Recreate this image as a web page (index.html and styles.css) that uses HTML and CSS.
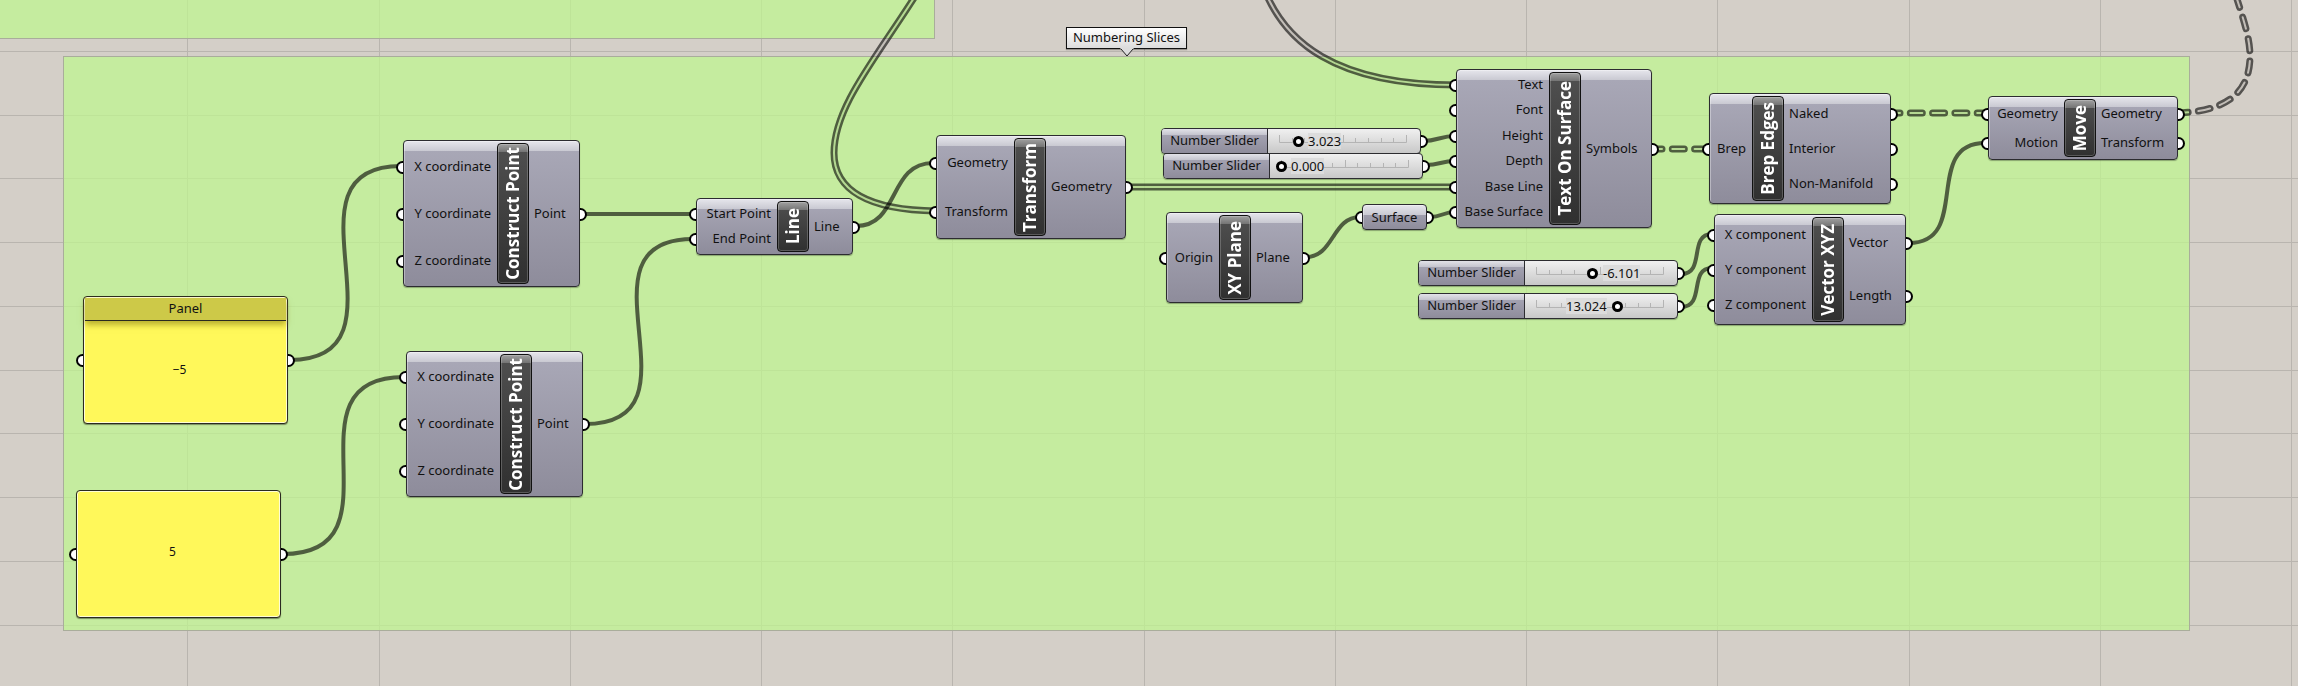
FILE: index.html
```html
<!DOCTYPE html>
<html lang="en">
<head>
<meta charset="utf-8">
<title>Numbering Slices</title>
<link rel="stylesheet" href="styles.css">
</head>
<body>
<main class="canvas">
  <svg class="layer" aria-hidden="true">
    <path class="grid" d="M187.500 0V2000M379.500 0V2000M570.500 0V2000M761.500 0V2000M952.500 0V2000M1144.500 0V2000M1335.500 0V2000M1526.500 0V2000M1717.500 0V2000M1909.500 0V2000M2100.500 0V2000M2291.500 0V2000M0 51.500H4000M0 115.500H4000M0 178.500H4000M0 242.500H4000M0 306.500H4000M0 370.500H4000M0 433.500H4000M0 497.500H4000M0 561.500H4000M0 625.500H4000"/>
  </svg>
  <div class="group group-upper"></div>
  <div class="group group-main"></div>

  <svg class="layer" aria-hidden="true">
    <defs>
      <path id="d1" d="M914 -2C873 62 834 108 834 153C834 190 868 210 936 211"/>
      <path id="d2" d="M1268 -2C1287 38 1330 85 1457 85"/>
      <path id="d3" d="M1126 187H1457"/>
      <path id="t1" d="M1650 149H1709"/>
      <path id="t2" d="M1888 113H1988"/>
      <path id="t3" d="M2176 113C2222 112 2250 96 2250 56C2250 38 2243 18 2236 -4"/>
      <mask id="hollow" maskUnits="userSpaceOnUse" x="0" y="0" width="2400" height="700">
        <g class="mask-double-outer"><use href="#d1"/><use href="#d2"/><use href="#d3"/></g>
        <g class="mask-double-inner"><use href="#d1"/><use href="#d2"/><use href="#d3"/></g>
        <g class="mask-tree-outer"><use href="#t1"/><use href="#t2"/><use href="#t3"/></g>
        <g class="mask-tree-inner"><use href="#t1"/><use href="#t2"/><use href="#t3"/></g>
      </mask>
    </defs>
    <rect class="hollow-wires" width="2400" height="700" mask="url(#hollow)"/>
    <g class="wire">
      <path d="M290 360C418 360 273 166 401 166"/>
      <path d="M283 554C408 554 279 377 404 377"/>
      <path d="M582 214H696"/>
      <path d="M585 424C711 424 567 239 693 239"/>
      <path d="M856 226C900 226 888 163 933 163"/>
      <path d="M1423 141C1438 141 1440 136 1455 136"/>
      <path d="M1426 165C1440 165 1441 161 1455 161"/>
      <path d="M1306 257C1334 257 1332 217 1360 217"/>
      <path d="M1430 217C1442 217 1443 212 1455 212"/>
      <path d="M1681 274C1706 274 1688 234 1712 234"/>
      <path d="M1681 307C1706 307 1688 268 1712 268"/>
      <path d="M1909 243C1972 243 1922 143 1985 143"/>
    </g>
  </svg>

  <div class="tag">Numbering Slices<svg class="tag-tip" width="14" height="9" viewBox="0 0 14 9" aria-hidden="true"><path class="tip-fill" d="M0 0H14L7 8Z"/><path class="tip-line" d="M1 1L7 8L13 1"/></svg></div>

  <section class="panel panel-a in out">
    <h2 class="panel-title">Panel</h2>
    <div class="panel-value">−5</div>
  </section>
  <section class="panel panel-b in out">
    <div class="panel-value">5</div>
  </section>

  <section class="node construct-a">
    <ul class="ports inputs"><li class="in">X coordinate</li><li class="in">Y coordinate</li><li class="in">Z coordinate</li></ul>
    <h2 class="name"><span>Construct Point</span></h2>
    <ul class="ports outputs"><li class="out">Point</li></ul>
  </section>
  <section class="node construct-b">
    <ul class="ports inputs"><li class="in">X coordinate</li><li class="in">Y coordinate</li><li class="in">Z coordinate</li></ul>
    <h2 class="name"><span>Construct Point</span></h2>
    <ul class="ports outputs"><li class="out">Point</li></ul>
  </section>
  <section class="node line">
    <ul class="ports inputs"><li class="in">Start Point</li><li class="in">End Point</li></ul>
    <h2 class="name"><span>Line</span></h2>
    <ul class="ports outputs"><li class="out">Line</li></ul>
  </section>
  <section class="node transform">
    <ul class="ports inputs"><li class="in">Geometry</li><li class="in">Transform</li></ul>
    <h2 class="name"><span>Transform</span></h2>
    <ul class="ports outputs"><li class="out">Geometry</li></ul>
  </section>
  <section class="node plane">
    <ul class="ports inputs"><li class="in">Origin</li></ul>
    <h2 class="name"><span>XY Plane</span></h2>
    <ul class="ports outputs"><li class="out">Plane</li></ul>
  </section>
  <section class="node param in out">Surface</section>
  <section class="node text-surface">
    <ul class="ports inputs"><li class="in">Text</li><li class="in">Font</li><li class="in">Height</li><li class="in">Depth</li><li class="in">Base Line</li><li class="in">Base Surface</li></ul>
    <h2 class="name"><span>Text On Surface</span></h2>
    <ul class="ports outputs"><li class="out">Symbols</li></ul>
  </section>
  <section class="node brep">
    <ul class="ports inputs"><li class="in">Brep</li></ul>
    <h2 class="name"><span>Brep Edges</span></h2>
    <ul class="ports outputs"><li class="out">Naked</li><li class="out">Interior</li><li class="out">Non-Manifold</li></ul>
  </section>
  <section class="node vector">
    <ul class="ports inputs"><li class="in">X component</li><li class="in">Y component</li><li class="in">Z component</li></ul>
    <h2 class="name"><span>Vector XYZ</span></h2>
    <ul class="ports outputs"><li class="out">Vector</li><li class="out">Length</li></ul>
  </section>
  <section class="node move">
    <ul class="ports inputs"><li class="in">Geometry</li><li class="in">Motion</li></ul>
    <h2 class="name"><span>Move</span></h2>
    <ul class="ports outputs"><li class="out">Geometry</li><li class="out">Transform</li></ul>
  </section>

  <div class="slider slider-a out">
    <label for="s1">Number Slider</label>
    <div class="track">
      <svg class="ticks" viewBox="0 0 130 10" aria-hidden="true"><path d="M1.500 1V8.500H128.500V1M14.500 8V4M26.500 8V4M39.500 8V4M52.500 8V4M65.500 8V1M77.500 8V4M90.500 8V4M103.500 8V4M115.500 8V4"/></svg>
      <output class="value" for="s1">3.023</output>
      <input type="range" id="s1" min="0" max="20" step="0.001" value="3.023">
    </div>
  </div>
  <div class="slider slider-b out">
    <label for="s2">Number Slider</label>
    <div class="track">
      <svg class="ticks" viewBox="0 0 130 10" aria-hidden="true"><path d="M1.500 1V8.500H128.500V1M14.500 8V4M26.500 8V4M39.500 8V4M52.500 8V4M65.500 8V1M77.500 8V4M90.500 8V4M103.500 8V4M115.500 8V4"/></svg>
      <output class="value" for="s2">0.000</output>
      <input type="range" id="s2" min="0" max="20" step="0.001" value="0">
    </div>
  </div>
  <div class="slider slider-c out">
    <label for="s3">Number Slider</label>
    <div class="track">
      <svg class="ticks" viewBox="0 0 130 10" aria-hidden="true"><path d="M1.500 1V8.500H128.500V1M14.500 8V4M26.500 8V4M39.500 8V4M52.500 8V4M65.500 8V1M77.500 8V4M90.500 8V4M103.500 8V4M115.500 8V4"/></svg>
      <output class="value" for="s3">-6.101</output>
      <input type="range" id="s3" min="-50" max="50" step="0.001" value="-6.101">
    </div>
  </div>
  <div class="slider slider-d out">
    <label for="s4">Number Slider</label>
    <div class="track">
      <svg class="ticks" viewBox="0 0 130 10" aria-hidden="true"><path d="M1.500 1V8.500H128.500V1M14.500 8V4M26.500 8V4M39.500 8V4M52.500 8V4M65.500 8V1M77.500 8V4M90.500 8V4M103.500 8V4M115.500 8V4"/></svg>
      <output class="value" for="s4">13.024</output>
      <input type="range" id="s4" min="-50" max="50" step="0.001" value="13.024">
    </div>
  </div>
</main>
</body>
</html>
```
FILE: styles.css
```css
*, *::before, *::after { box-sizing: border-box; }
body {
  margin: 0;
  font-family: "Noto Sans", "Open Sans", sans-serif;
  font-size: 13px;
  line-height: 18px;
  color: #111;
}
h2, ul { margin: 0; padding: 0; font-size: inherit; font-weight: inherit; }
li { list-style: none; }

.canvas {
  position: relative;
  min-height: 100vh;
  overflow: hidden;
  background: #d4cfc8;
}
.layer { position: absolute; inset: 0; width: 100%; height: 100%; }
.grid { fill: none; stroke: #b9b5af; stroke-width: 1; }

/* Groups */
.group { position: absolute; background: rgba(191, 246, 143, 0.72); border: 1px solid #a9ad9b; }
.group-upper { left: -2px; top: -2px; width: 937px; height: 41px; }
.group-main { left: 63px; top: 56px; width: 2127px; height: 575px; }

/* Wires */
.wire { fill: none; stroke: #000; stroke-opacity: 0.6; stroke-width: 4; }
.hollow-wires { fill: #000; fill-opacity: 0.6; }
.mask-double-outer, .mask-double-inner, .mask-tree-outer, .mask-tree-inner { fill: none; }
.mask-double-outer { stroke: #fff; stroke-width: 7; }
.mask-double-inner { stroke: #222; stroke-width: 2; }
.mask-tree-outer, .mask-tree-inner { stroke-linecap: round; stroke-dasharray: 12 10.300; }
.mask-tree-outer { stroke: #fff; stroke-width: 7; }
.mask-tree-inner { stroke: #222; stroke-width: 2; }

/* Half-circle grips on the sides of an object */
.in, .out { position: relative; }
.in::before, .out::after {
  content: "";
  position: absolute;
  top: calc(50% - 6px);
  width: 7px;
  height: 13px;
  border: 2px solid #000;
  background: #fff;
}
.in::before { left: -8px; border-right: 0; border-radius: 7px 0 0 7px; }
.out::after { right: -8px; border-left: 0; border-radius: 0 7px 7px 0; }

/* Components */
.node {
  position: absolute;
  display: grid;
  grid-template-columns: var(--inputs) 32px 1fr;
  column-gap: 5px;
  padding: 2px 0;
  border: 1px solid #2c2c30;
  border-radius: 4px;
  background:
    linear-gradient(#e6e6ec, #c9c9d2) 0 0 / 100% 10px no-repeat,
    linear-gradient(#aaa9b8, #8e8c9b);
  box-shadow: inset 1px 1px 0 rgba(255, 255, 255, 0.35), 0 1px 1px rgba(0, 0, 0, 0.3);
}
.ports { display: flex; flex-direction: column; }
.ports li { flex: 1; display: flex; align-items: center; white-space: nowrap; padding-bottom: 2px; }
.inputs li { justify-content: flex-end; padding-right: 1px; }
.name {
  display: flex;
  align-items: center;
  justify-content: center;
  border: 1px solid #111;
  border-radius: 4px;
  background:
    linear-gradient(#a0a0a0, #747474) 0 0 / 100% 8px no-repeat,
    linear-gradient(#505050, #303030);
  box-shadow: inset 0 0 0 1px rgba(255, 255, 255, 0.2);
  color: #fff;
  font-family: "Open Sans", "Noto Sans", sans-serif;
  font-size: 17px;
  font-weight: 700;
  line-height: 22px;
  white-space: nowrap;
  min-height: 0;
}
.name span { writing-mode: vertical-rl; transform: rotate(180deg); }

.construct-a { left: 403px; top: 140px; width: 177px; height: 147px; --inputs: 88px; }
.construct-b { left: 406px; top: 351px; width: 177px; height: 146px; --inputs: 88px; }
.line { left: 696px; top: 198px; width: 157px; height: 57px; --inputs: 75px; }
.transform { left: 936px; top: 135px; width: 190px; height: 104px; --inputs: 72px; }
.plane { left: 1166px; top: 212px; width: 137px; height: 91px; --inputs: 47px; }
.text-surface { left: 1456px; top: 69px; width: 196px; height: 159px; --inputs: 87px; }
.brep { left: 1709px; top: 93px; width: 182px; height: 111px; --inputs: 37px; }
.vector { left: 1714px; top: 214px; width: 192px; height: 111px; --inputs: 92px; }
.move { left: 1988px; top: 96px; width: 190px; height: 64px; --inputs: 70px; }
.param {
  left: 1362px;
  top: 204px;
  width: 65px;
  height: 26px;
  display: flex;
  align-items: center;
  justify-content: center;
}

/* Text panels */
.panel {
  position: absolute;
  display: flex;
  flex-direction: column;
  width: 205px;
  height: 128px;
  border: 1px solid #2a2a20;
  border-radius: 4px;
  background: #fff85a;
  box-shadow: inset 0 0 0 1px rgba(255, 255, 255, 0.75), 0 1px 1px rgba(0, 0, 0, 0.4);
}
.panel-a { left: 83px; top: 296px; }
.panel-b { left: 76px; top: 490px; }
.panel-title {
  margin: 1px 1px 0;
  height: 23px;
  line-height: 20px;
  text-align: center;
  background: #cdc948;
  border-bottom: 1px solid #2a2a20;
  box-shadow: 0 4px 6px rgba(140, 130, 20, 0.6);
}
.panel-value {
  flex: 1;
  display: flex;
  align-items: center;
  justify-content: center;
  padding: 0 12px 5px 0;
  font-size: 12px;
}

/* Sliders */
.slider {
  position: absolute;
  display: flex;
  width: 260px;
  height: 26px;
  border: 1px solid #2c2c30;
  border-radius: 4px;
  background: linear-gradient(#f0f0f0, #c8c8c8);
  box-shadow: 0 1px 1px rgba(0, 0, 0, 0.3);
}
.slider label {
  width: 106px;
  line-height: 23px;
  text-align: center;
  border-right: 1px solid #2c2c30;
  border-radius: 3px 0 0 3px;
  background:
    linear-gradient(#e2e2e8, #c4c4ce) 0 0 / 100% 6px no-repeat,
    linear-gradient(#aaa9b8, #8e8c9b);
}
.track { flex: 1; position: relative; display: flex; align-items: center; padding-left: 6px; }
.ticks { position: absolute; left: 10px; top: 5px; width: 130px; height: 10px; fill: none; stroke: #b4b4b4; }
.track input {
  position: relative;
  appearance: none;
  width: 139px;
  height: 12px;
  margin: 0;
  background: transparent;
}
.track input::-webkit-slider-thumb {
  appearance: none;
  box-sizing: border-box;
  width: 11px;
  height: 11px;
  border: 3px solid #000;
  border-radius: 50%;
  background: #fff;
}
.track input::-moz-range-thumb {
  box-sizing: border-box;
  width: 11px;
  height: 11px;
  border: 3px solid #000;
  border-radius: 50%;
  background: #fff;
}
.value { position: absolute; top: 4px; line-height: 16px; background: #dcdcdc; }
.slider-a { left: 1161px; top: 128px; }
.slider-b { left: 1163px; top: 153px; }
.slider-c { left: 1418px; top: 260px; }
.slider-d { left: 1418px; top: 293px; }
.slider-a .value { left: 40px; }
.slider-b .value { left: 21px; }
.slider-c .value { left: 78px; }
.slider-d .value { left: 41px; }

/* Group caption */
.tag {
  position: absolute;
  left: 1066px;
  top: 27px;
  width: 121px;
  height: 22px;
  line-height: 19px;
  text-align: center;
  white-space: nowrap;
  border: 1px solid #111;
  background: linear-gradient(#fff, #dcdcdc);
  box-shadow: 0 1px 1px rgba(0, 0, 0, 0.3);
}
.tag-tip { position: absolute; left: 53px; top: 20px; }
.tip-fill { fill: #dcdcdc; }
.tip-line { fill: none; stroke: #222; }
```
